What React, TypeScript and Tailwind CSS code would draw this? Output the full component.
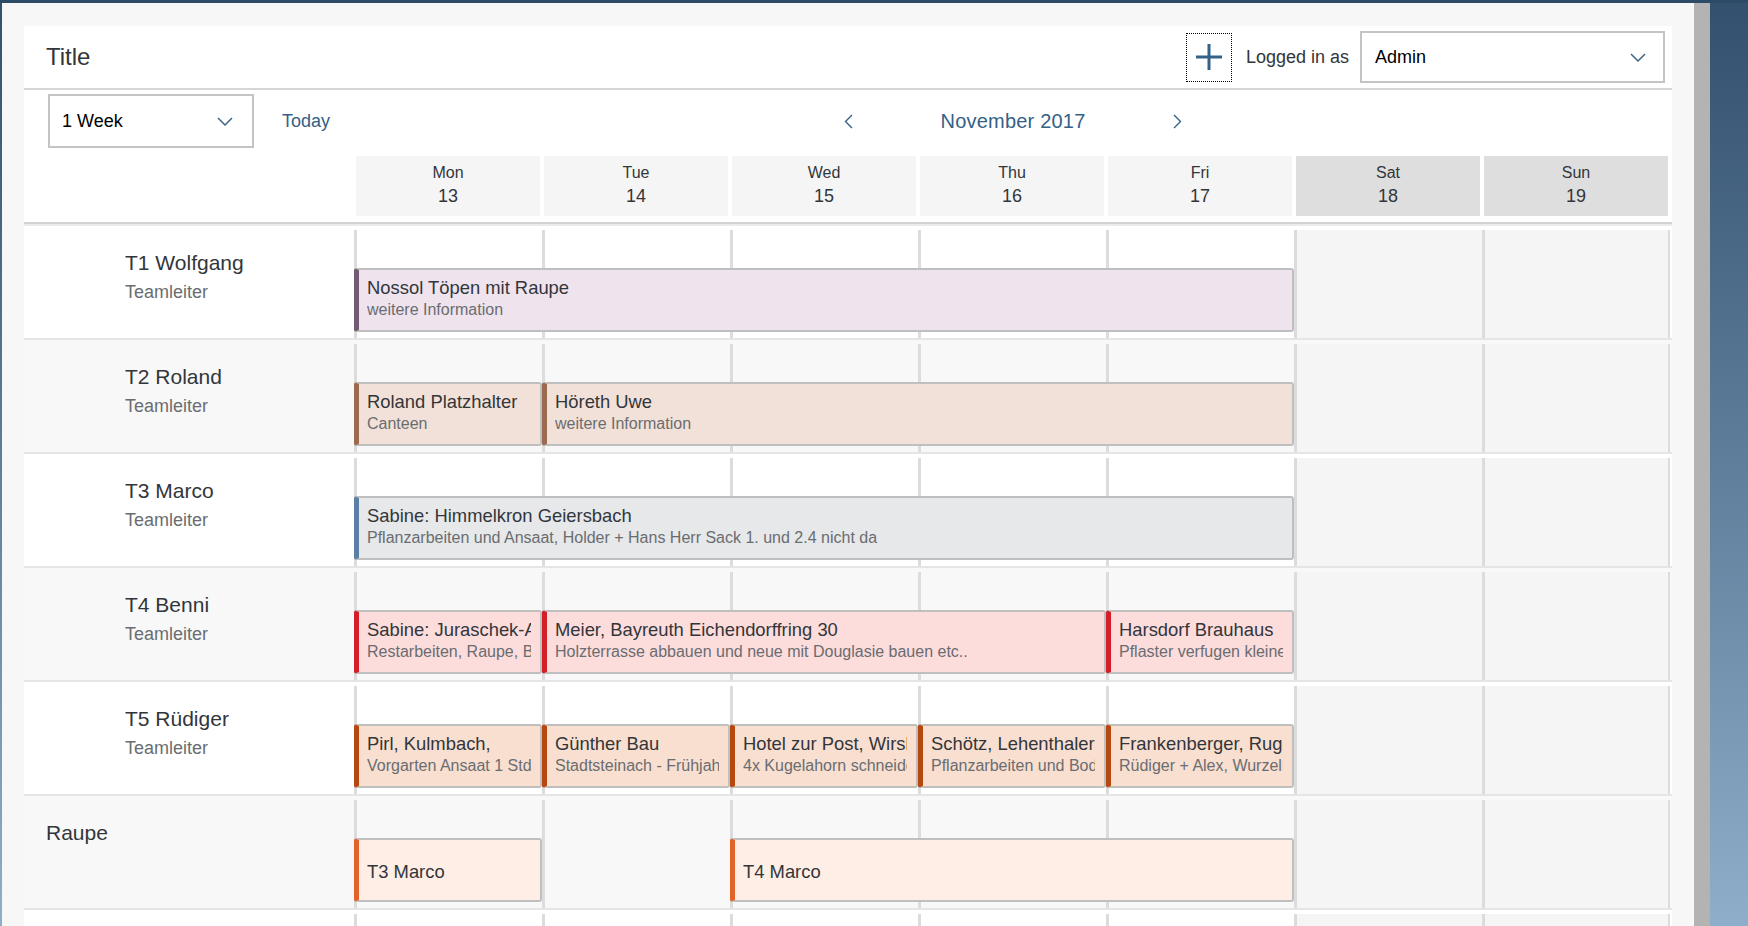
import React from 'react';

type Ev = { start: number; span: number; title: string; sub?: string; tone: string };
type Row = { name: string; role?: string; indent?: boolean; events: Ev[] };

const toneClass: Record<string, string> = {
  purple: 'bg-[#efe3ee] border-l-[#735c71]',
  brown: 'bg-[#f2e1d8] border-l-[#9b6b50]',
  slate: 'bg-[#e7e8ea] border-l-[#5d7ea6]',
  red: 'bg-[#fddcdc] border-l-[#d21f28]',
  rust: 'bg-[#f9dfd0] border-l-[#b5470f]',
  orange: 'bg-[#feeee6] border-l-[#e2642a]',
};

const colStart = ['col-start-2', 'col-start-3', 'col-start-4', 'col-start-5', 'col-start-6', 'col-start-7', 'col-start-8'];
const colSpan = ['', 'col-span-1', 'col-span-2', 'col-span-3', 'col-span-4', 'col-span-5'];

const days = [
  { d: 'Mon', n: '13', we: false },
  { d: 'Tue', n: '14', we: false },
  { d: 'Wed', n: '15', we: false },
  { d: 'Thu', n: '16', we: false },
  { d: 'Fri', n: '17', we: false },
  { d: 'Sat', n: '18', we: true },
  { d: 'Sun', n: '19', we: true },
];

const rows: Row[] = [
  {
    name: 'T1 Wolfgang',
    role: 'Teamleiter',
    indent: true,
    events: [{ start: 0, span: 5, title: 'Nossol Töpen mit Raupe', sub: 'weitere Information', tone: 'purple' }],
  },
  {
    name: 'T2 Roland',
    role: 'Teamleiter',
    indent: true,
    events: [
      { start: 0, span: 1, title: 'Roland Platzhalter', sub: 'Canteen', tone: 'brown' },
      { start: 1, span: 4, title: 'Höreth Uwe', sub: 'weitere Information', tone: 'brown' },
    ],
  },
  {
    name: 'T3 Marco',
    role: 'Teamleiter',
    indent: true,
    events: [
      {
        start: 0,
        span: 5,
        title: 'Sabine: Himmelkron Geiersbach',
        sub: 'Pflanzarbeiten und Ansaat, Holder + Hans Herr Sack 1. und 2.4 nicht da',
        tone: 'slate',
      },
    ],
  },
  {
    name: 'T4 Benni',
    role: 'Teamleiter',
    indent: true,
    events: [
      { start: 0, span: 1, title: 'Sabine: Juraschek-Albrecht', sub: 'Restarbeiten, Raupe, Bagger', tone: 'red' },
      {
        start: 1,
        span: 3,
        title: 'Meier, Bayreuth Eichendorffring 30',
        sub: 'Holzterrasse abbauen und neue mit Douglasie bauen etc..',
        tone: 'red',
      },
      { start: 4, span: 1, title: 'Harsdorf Brauhaus', sub: 'Pflaster verfugen kleine Reparaturen', tone: 'red' },
    ],
  },
  {
    name: 'T5 Rüdiger',
    role: 'Teamleiter',
    indent: true,
    events: [
      { start: 0, span: 1, title: 'Pirl, Kulmbach,', sub: 'Vorgarten Ansaat 1 Std', tone: 'rust' },
      { start: 1, span: 1, title: 'Günther Bau', sub: 'Stadtsteinach - Frühjahrsputz', tone: 'rust' },
      { start: 2, span: 1, title: 'Hotel zur Post, Wirsberg', sub: '4x Kugelahorn schneiden', tone: 'rust' },
      { start: 3, span: 1, title: 'Schötz, Lehenthaler Str.', sub: 'Pflanzarbeiten und Bodenarbeiten', tone: 'rust' },
      { start: 4, span: 1, title: 'Frankenberger, Rugendorf', sub: 'Rüdiger + Alex, Wurzeln', tone: 'rust' },
    ],
  },
  {
    name: 'Raupe',
    indent: false,
    events: [
      { start: 0, span: 1, title: 'T3 Marco', tone: 'orange' },
      { start: 2, span: 3, title: 'T4 Marco', tone: 'orange' },
    ],
  },
  { name: '', indent: false, events: [] },
];

function Chevron({ dir }: { dir: 'left' | 'right' | 'down' }) {
  if (dir === 'down')
    return (
      <svg width="16" height="9" viewBox="0 0 16 9" fill="none">
        <polyline points="1,1 8,8 15,1" stroke="#3f6587" strokeWidth="1.5" />
      </svg>
    );
  return (
    <svg width="9" height="15" viewBox="0 0 9 15" fill="none">
      <polyline
        points={dir === 'left' ? '8,1 1.5,7.5 8,14' : '1,1 7.5,7.5 1,14'}
        stroke="#346187"
        strokeWidth="1.4"
      />
    </svg>
  );
}

function Event({ e }: { e: Ev }) {
  const single = !e.sub;
  return (
    <div
      className={`row-start-1 ${colStart[e.start]} ${colSpan[e.span]} relative z-10 self-start mt-[38px] h-[64px] border-2 border-[#bfbfbf] border-l-[5px] rounded-[3px] ${toneClass[e.tone]} pl-[8px] pr-[9px] overflow-hidden ${single ? 'flex items-center pt-[3px]' : 'pt-[7px]'}`}
    >
      <div className="text-[18.4px] leading-[22px] text-[#32363a] whitespace-nowrap overflow-hidden">{e.title}</div>
      {e.sub && (
        <div className="mt-[1px] text-[16px] leading-[20px] text-[#6a6d70] whitespace-nowrap overflow-hidden">{e.sub}</div>
      )}
    </div>
  );
}

export default function App() {
  return (
    <div className="w-[1748px] h-[926px] overflow-hidden flex flex-col bg-gradient-to-b from-[#33516e] to-[#8eaeca] font-['Liberation_Sans',Arial,sans-serif]">
      <div className="h-[3px] bg-[#2d4a67] shrink-0" />
      <div className="flex flex-1 min-h-0">
        <div className="w-[2px] shrink-0" />
        <div className="w-[1692px] shrink-0 bg-[#f7f7f7] pl-[22px] pt-[23px] overflow-hidden">
          <div className="w-[1648px] bg-white flex flex-col">
            {/* Header */}
            <div className="h-[62px] flex items-center pl-[22px] pr-[7px]">
              <div className="text-[24px] text-[#32363a]">Title</div>
              <div className="ml-auto flex items-center">
                <div className="w-[46px] h-[49px] border border-dotted border-black flex items-center justify-center">
                  <svg width="26" height="26" viewBox="0 0 26 26" fill="none">
                    <path d="M13 0v26M0 13h26" stroke="#346187" strokeWidth="3" />
                  </svg>
                </div>
                <div className="ml-[14px] text-[18px] text-[#32363a]">Logged in as</div>
                <div className="ml-[11px] w-[305px] h-[52px] border-2 border-[#c4c4c4] flex items-center pl-[13px] pr-[17px]">
                  <span className="text-[18px] text-black">Admin</span>
                  <span className="ml-auto flex">
                    <Chevron dir="down" />
                  </span>
                </div>
              </div>
            </div>
            <div className="h-[2px] bg-[#d6d6d6]" />
            {/* Toolbar */}
            <div className="grid grid-cols-[330px_1fr] h-[54px] mt-[4px]">
              <div className="flex items-center pl-[24px] whitespace-nowrap">
                <div className="w-[206px] h-[54px] shrink-0 border-2 border-[#c4c4c4] flex items-center pl-[12px] pr-[19px]">
                  <span className="text-[18px] text-black">1 Week</span>
                  <span className="ml-auto flex">
                    <Chevron dir="down" />
                  </span>
                </div>
                <div className="ml-[28px] text-[18px] text-[#346187]">Today</div>
              </div>
              <div className="flex items-center justify-center">
                <Chevron dir="left" />
                <div className="mx-[88px] text-[20px] text-[#346187] tracking-[0.2px]">November 2017</div>
                <Chevron dir="right" />
              </div>
            </div>
            {/* Day header */}
            <div className="grid grid-cols-[330px_repeat(7,188px)] mt-[8px] h-[60px]">
              <div />
              {days.map((d) => (
                <div
                  key={d.d}
                  className={`mx-[2px] flex flex-col items-center pt-[7px] text-[#32363a] ${d.we ? 'bg-[#dedede]' : 'bg-[#f5f5f5]'}`}
                >
                  <div className="text-[16px] leading-[20px]">{d.d}</div>
                  <div className="mt-[2px] text-[18px] leading-[22px]">{d.n}</div>
                </div>
              ))}
            </div>
            <div className="mt-[6px] h-[2px] bg-[#d2d2d2]" />
            <div className="h-[2px] bg-[#ebebeb]" />
            {/* Rows */}
            {rows.map((r, i) => (
              <div
                key={i}
                className={`pt-[4px] border-b-2 border-[#e5e5e5] ${i % 2 === 0 ? 'bg-white' : 'bg-[#f8f8f8]'}`}
              >
                <div className="grid grid-cols-[330px_repeat(7,188px)] grid-rows-[108px]">
                  <div className={`row-start-1 col-start-1 pt-[20px] ${r.indent ? 'pl-[101px]' : 'pl-[22px]'}`}>
                    {r.name && <div className="text-[21px] leading-[26px] text-[#32363a]">{r.name}</div>}
                    {r.role && <div className="mt-[5px] text-[18px] leading-[22px] text-[#6a6d70]">{r.role}</div>}
                  </div>
                  {days.map((d, j) => (
                    <div
                      key={d.d}
                      className={`row-start-1 ${colStart[j]} border-l-[3px] border-[#dcdcdc] ${d.we ? 'bg-[#f5f5f5]' : ''} ${j === 6 ? 'border-r-2' : ''}`}
                    />
                  ))}
                  {r.events.map((e, k) => (
                    <Event key={k} e={e} />
                  ))}
                </div>
              </div>
            ))}
          </div>
        </div>
        <div className="w-[16px] shrink-0 bg-[#b3b3b3]" />
        <div className="flex-1" />
      </div>
    </div>
  );
}
